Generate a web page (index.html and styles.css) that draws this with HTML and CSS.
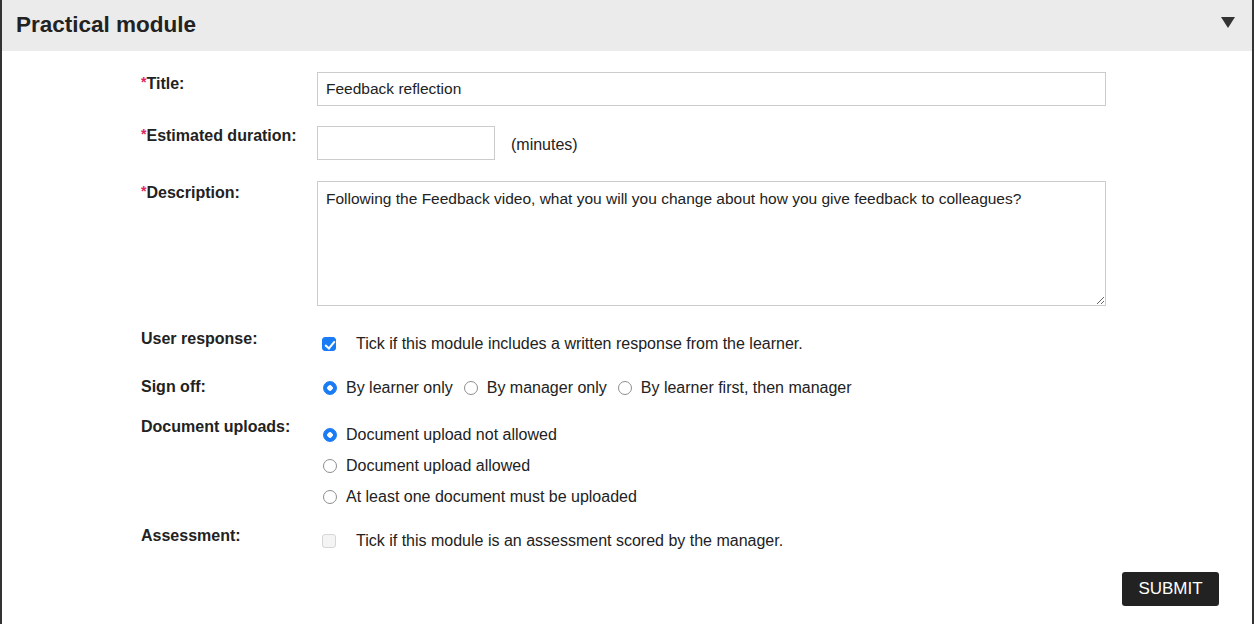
FILE: index.html
```html
<!DOCTYPE html>
<html lang="en">
<head>
  <meta charset="UTF-8" />
  <meta name="viewport" content="width=device-width, initial-scale=1.0"/>
  <title>Practical module</title>
  <link rel="stylesheet" href="styles.css">
</head>
<body>

  <div class="panel">
    <div class="panel-header">
      <h2>Practical module</h2>
      <span class="toggle"></span>
    </div>

    <form class="module-form">
      <div class="row row-title">
        <label for="title"><span class="req">*</span>Title:</label>
        <div class="field">
          <input type="text" id="title" class="text-wide" value="Feedback reflection" />
        </div>
      </div>

      <div class="row row-duration">
        <label for="duration"><span class="req">*</span>Estimated duration:</label>
        <div class="field inline">
          <input type="text" id="duration" class="text-short" />
          <span class="unit">(minutes)</span>
        </div>
      </div>

      <div class="row row-description">
        <label for="description"><span class="req">*</span>Description:</label>
        <div class="field">
          <textarea id="description">Following the Feedback video, what you will you change about how you give feedback to colleagues?</textarea>
        </div>
      </div>

      <div class="row row-response">
        <label>User response:</label>
        <div class="field check-field">
          <input type="checkbox" id="response" checked />
          <span>Tick if this module includes a written response from the learner.</span>
        </div>
      </div>

      <div class="row row-signoff">
        <label>Sign off:</label>
        <div class="field radio-inline">
          <label class="opt"><input type="radio" name="signoff" checked /> By learner only</label>
          <label class="opt"><input type="radio" name="signoff" /> By manager only</label>
          <label class="opt"><input type="radio" name="signoff" /> By learner first, then manager</label>
        </div>
      </div>

      <div class="row row-uploads">
        <label>Document uploads:</label>
        <div class="field radio-list">
          <label class="opt"><input type="radio" name="uploads" checked /> Document upload not allowed</label>
          <label class="opt"><input type="radio" name="uploads" /> Document upload allowed</label>
          <label class="opt"><input type="radio" name="uploads" /> At least one document must be uploaded</label>
        </div>
      </div>

      <div class="row row-assessment">
        <label>Assessment:</label>
        <div class="field check-field">
          <input type="checkbox" id="assessment" disabled />
          <span>Tick if this module is an assessment scored by the manager.</span>
        </div>
      </div>

      <div class="actions">
        <button type="button">SUBMIT</button>
      </div>
    </form>
  </div>

</body>
</html>
```

FILE: styles.css
```css
body {
  font-family: "Liberation Sans", Arial, sans-serif;
  background-color: white;
  color: #222;
  margin: 0;
  padding: 0;
}

.panel {
  border-left: 2px solid #333;
  border-right: 2px solid #333;
  min-height: 624px;
  box-sizing: border-box;
}

.panel-header {
  background-color: #ebebeb;
  height: 51px;
  display: flex;
  align-items: center;
  justify-content: space-between;
  padding: 0 17px 0 14px;
}

.panel-header h2 {
  margin: 0;
  font-size: 22.5px;
  font-weight: bold;
  color: #222;
  padding-bottom: 2px;
}

.toggle {
  width: 0;
  height: 0;
  border-left: 7px solid transparent;
  border-right: 7px solid transparent;
  border-top: 11px solid #333;
  margin-bottom: 6px;
}

.module-form {
  padding: 21px 0 0 139px;
}

.row {
  display: grid;
  grid-template-columns: 176px 789px;
  align-items: start;
}

.row > label {
  font-size: 16px;
  font-weight: bold;
  line-height: 18px;
  padding-top: 1px;
}

.req {
  color: #e0245e;
  font-size: 14px;
  vertical-align: top;
  line-height: 14px;
}

.field {
  font-size: 16px;
  line-height: 18px;
}

input[type="text"],
textarea {
  font-family: "Liberation Sans", Arial, sans-serif;
  font-size: 15.5px;
  color: #222;
  border: 1px solid #ccc;
  border-radius: 0;
  padding: 0 8px;
  box-sizing: border-box;
  outline: none;
}

.text-wide {
  width: 789px;
  height: 34px;
  padding-top: 1px;
}

.text-short {
  width: 178px;
  height: 34px;
}

textarea {
  width: 789px;
  height: 125px;
  padding: 8px 8px 7px;
  line-height: 18px;
  display: block;
}

.inline {
  display: flex;
  align-items: center;
}

.unit {
  margin-left: 16px;
  padding-top: 3px;
}

.row-title {
  margin-bottom: 20px;
}

.row-title > label {
  padding-top: 3px;
}

.row-duration {
  margin-bottom: 21px;
}

.row-description {
  margin-bottom: 23px;
}

.row-description > label {
  padding-top: 3px;
}

.check-field {
  display: flex;
  align-items: center;
  padding-top: 6px;
}

.check-field span {
  margin-left: 20px;
}

.row-response {
  margin-bottom: 24px;
}

.row-signoff {
  margin-bottom: 20px;
}

.radio-inline {
  display: flex;
  padding-top: 2px;
}

.opt {
  display: flex;
  align-items: center;
}

.radio-inline .opt {
  margin-right: 5px;
}

.radio-list {
  padding-top: 9px;
}

.radio-list .opt {
  margin-bottom: 13px;
}

.radio-list .opt:last-child {
  margin-bottom: 0;
}

.row-uploads {
  margin-bottom: 20px;
}

input[type="radio"],
input[type="checkbox"] {
  appearance: none;
  -webkit-appearance: none;
  width: 14px;
  height: 14px;
  margin: 0;
  box-sizing: border-box;
  background: white;
  border: 1px solid #8e8e8e;
  flex-shrink: 0;
}

input[type="radio"] {
  border-radius: 50%;
  margin: 0 9px 0 6px;
}

input[type="radio"]:checked {
  background: radial-gradient(circle, white 0 2.5px, #1a7cf5 3px);
  border-color: #1a7cf5;
}

input[type="checkbox"] {
  border-radius: 3px;
  margin-left: 5px;
  position: relative;
}

input[type="checkbox"]:checked {
  background: #1a7cf5;
  border-color: #1a7cf5;
}

input[type="checkbox"]:checked::after {
  content: "";
  position: absolute;
  left: 3.5px;
  top: 0.5px;
  width: 4px;
  height: 8px;
  border: solid white;
  border-width: 0 2px 2px 0;
  transform: rotate(40deg);
}

input[type="checkbox"]:disabled {
  background: #f4f4f4;
  border-color: #d6d6d6;
}

.actions {
  display: flex;
  justify-content: flex-end;
  margin: 22px 33px 0 0;
}

button {
  background-color: #222;
  color: white;
  border: none;
  border-radius: 3px;
  font-family: "Liberation Sans", Arial, sans-serif;
  font-size: 17px;
  height: 34px;
  width: 97px;
  cursor: pointer;
}
```
